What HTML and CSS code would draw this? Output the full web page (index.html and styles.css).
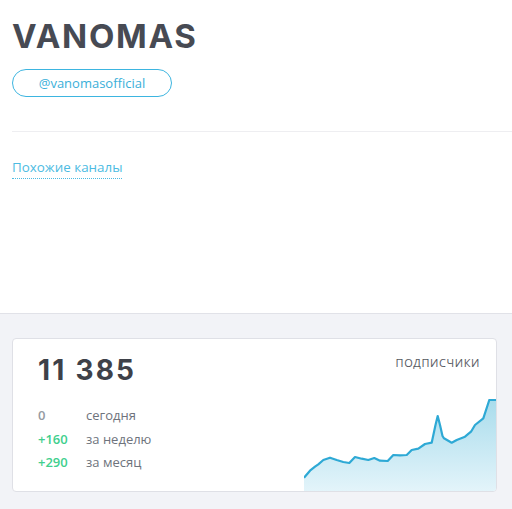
FILE: index.html
```html
<!DOCTYPE html>
<html lang="ru">
<head>
<meta charset="utf-8">
<title>VANOMAS</title>
<link rel="stylesheet" href="styles.css">
</head>
<body>
<section class="top">
  <h1 class="title">VANOMAS</h1>
  <a class="handle" href="#">@vanomasofficial</a>
  <hr class="sep">
  <a class="similar" href="#">Похожие каналы</a>
</section>
<section class="stats">
  <div class="card">
    <div class="left">
      <div class="total">11 385</div>
      <div class="rows">
        <div class="row"><span class="val zero">0</span><span class="lbl">сегодня</span></div>
        <div class="row"><span class="val plus">+160</span><span class="lbl">за неделю</span></div>
        <div class="row"><span class="val plus">+290</span><span class="lbl">за месяц</span></div>
      </div>
    </div>
    <div class="right">
      <div class="caption">ПОДПИСЧИКИ</div>
      <svg class="chart" width="192" height="92" viewBox="305 399 192 92">
        <defs>
          <linearGradient id="g" x1="0" y1="0" x2="0" y2="1">
            <stop offset="0" stop-color="#a9dcec"/>
            <stop offset="1" stop-color="#e3f4fa"/>
          </linearGradient>
        </defs>
        <path fill="url(#g)" d="M305,477.7 L311,470.7 L316,466.7 L319.3,464.3 L324.3,460 L331,457.7 L337.7,460 L344.3,462 L350.3,463 L356,457 L362.7,458.7 L369.3,460 L375.3,458 L381,460.7 L388.7,461 L394.3,455 L401,455.3 L407.7,455 L412.7,450 L419.3,448.7 L426,444 L432.7,442.7 L436.5,425 L438.7,416 L441,425 L443.5,436 L445,438.3 L452.7,442.7 L457.7,440 L466,436.7 L472,431.7 L476,425 L484.3,418.3 L490.3,400 L497,400 L497,491 L305,491 Z"/>
        <polyline fill="none" stroke="#2ea9d5" stroke-width="2.2" stroke-linejoin="round" points="305,477.7 311,470.7 316,466.7 319.3,464.3 324.3,460 331,457.7 337.7,460 344.3,462 350.3,463 356,457 362.7,458.7 369.3,460 375.3,458 381,460.7 388.7,461 394.3,455 401,455.3 407.7,455 412.7,450 419.3,448.7 426,444 432.7,442.7 436.5,425 438.7,416 441,425 443.5,436 445,438.3 452.7,442.7 457.7,440 466,436.7 472,431.7 476,425 484.3,418.3 490.3,400 497,400"/>
      </svg>
    </div>
  </div>
</section>
</body>
</html>
```
FILE: styles.css
```css
* { box-sizing: border-box; }
html, body { margin: 0; padding: 0; }
body {
  width: 512px;
  height: 509px;
  overflow: hidden;
  background: #f2f3f7;
  font-family: "Open Sans", "Noto Sans", sans-serif;
}
.top {
  background: #fff;
  height: 314px;
  border-bottom: 1px solid #e1e2e8;
  padding: 16px 0 0 12px;
  display: flex;
  flex-direction: column;
  align-items: flex-start;
}
.title {
  margin: 0;
  font-family: "Inter", sans-serif;
  font-weight: 700;
  font-size: 33px;
  line-height: 40px;
  letter-spacing: 1.7px;
  color: #474a53;
}
.handle {
  margin-top: 13px;
  width: 160px;
  height: 28px;
  border: 1px solid #3db5e0;
  border-radius: 14px;
  color: #3aafd9;
  font-size: 13px;
  text-decoration: none;
  display: flex;
  align-items: center;
  justify-content: center;
}
.sep {
  align-self: stretch;
  margin: 34px 0 0 0;
  border: 0;
  border-top: 1px solid #eeeef1;
  height: 0;
}
.similar {
  margin-top: 26px;
  color: #4cbbe2;
  font-size: 13.4px;
  line-height: 18px;
  text-decoration: none;
  border-bottom: 1px dotted #4cbbe2;
  padding-bottom: 2px;
}
.stats {
  padding: 24px 15px 0 12px;
}
.card {
  background: #fff;
  border: 1px solid #dfe0e6;
  border-radius: 4px;
  height: 154px;
  display: flex;
  justify-content: space-between;
  overflow: hidden;
}
.left {
  padding: 14px 0 0 25px;
}
.total {
  font-family: "Inter", sans-serif;
  font-weight: 700;
  font-size: 28px;
  line-height: 34px;
  letter-spacing: 2.2px;
  color: #3e4149;
}
.rows {
  margin-top: 19px;
  display: flex;
  flex-direction: column;
  gap: 4px;
}
.row {
  display: flex;
  font-size: 13px;
  line-height: 19.5px;
}
.val {
  width: 48px;
  font-weight: 600;
}
.zero { color: #959aa2; }
.plus { color: #3fcf8e; }
.lbl { color: #6e737c; }
.right {
  display: flex;
  flex-direction: column;
  align-items: flex-end;
  justify-content: space-between;
}
.caption {
  margin: 16px 16px 0 0;
  font-size: 11px;
  line-height: 15px;
  color: #555860;
  letter-spacing: 0.6px;
}
.chart { display: block; }
```
